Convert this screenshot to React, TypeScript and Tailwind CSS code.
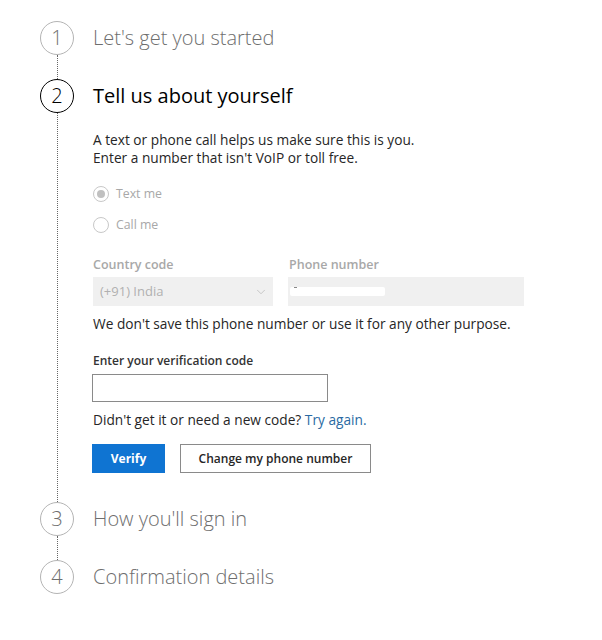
import { ChevronDown } from 'lucide-react';

const font = { fontFamily: '"Open Sans", "Noto Sans", "Liberation Sans", sans-serif' };

function StepCircle({ n, active }: { n: number; active?: boolean }) {
    return (
        <div
            className={`w-[34px] h-[34px] shrink-0 rounded-full flex items-center justify-center text-[20px] font-light ${
                active ? 'border-[1.5px] border-black text-black' : 'border-[1.5px] border-[#b4b4b4] text-[#6e6e6e]'
            }`}
        >
            {n}
        </div>
    );
}

function Step({ n, title, active, line, children }: { n: number; title: string; active?: boolean; line?: boolean; children?: React.ReactNode }) {
    return (
        <div className="flex gap-[19px]">
            <div className="w-[34px] flex flex-col items-center">
                <StepCircle n={n} active={active} />
                {line && <div className="flex-1 w-0 border-l border-dotted border-[#666]"></div>}
            </div>
            <div className={`flex-1 ${line && !children ? 'pb-[24px]' : ''}`}>
                <div className={`h-[34px] flex items-center text-[20px] ${active ? 'text-black font-normal' : 'text-[#6e6e6e] font-light'}`}>
                    {title}
                </div>
                {children}
            </div>
        </div>
    );
}

export default function App() {
    return (
        <div className="w-[602px] h-[640px] bg-white pt-[21px] pl-[40px]" style={font}>
            <Step n={1} title="Let's get you started" line />
            <Step n={2} title="Tell us about yourself" active line>
                <div className="pb-[29px]">
                    <p className="mt-[18px] text-[13.7px] leading-[18px] text-[#262626]">
                        A text or phone call helps us make sure this is you.
                        <br />
                        Enter a number that isn't VoIP or toll free.
                    </p>

                    {/* Radios (disabled) */}
                    <div className="mt-[19px] flex items-center gap-[7px] h-[16px]">
                        <span className="w-[16px] h-[16px] rounded-full border border-[#c8c8c8] flex items-center justify-center">
                            <span className="w-[8px] h-[8px] rounded-full bg-[#c0c0c0]"></span>
                        </span>
                        <span className="text-[12.3px] text-[#a8a8a8]">Text me</span>
                    </div>
                    <div className="mt-[15px] flex items-center gap-[7px] h-[16px]">
                        <span className="w-[16px] h-[16px] rounded-full border border-[#c8c8c8]"></span>
                        <span className="text-[12.3px] text-[#a8a8a8]">Call me</span>
                    </div>

                    {/* Country + phone */}
                    <div className="mt-[23px] flex gap-[15px]">
                        <div className="w-[180px]">
                            <div className="text-[12.5px] leading-[18px] font-semibold text-[#a8a8a8]">Country code</div>
                            <div className="mt-[3px] h-[29px] bg-[#f0f0f0] flex items-center justify-between pl-[7px] pr-[5px] text-[13px] text-[#b0b0b0]">
                                <span>(+91) India</span>
                                <ChevronDown className="w-[14px] h-[14px] text-[#b8b8b8]" strokeWidth={1.25} />
                            </div>
                        </div>
                        <div className="w-[236px]">
                            <div className="text-[12.5px] leading-[18px] font-semibold text-[#a8a8a8] pl-[1px]">Phone number</div>
                            <div className="mt-[3px] h-[29px] bg-[#f0f0f0] flex items-center pl-[2px]">
                                <div className="relative w-[95px] h-[9px] bg-white rounded-[2px]">
                                    <span className="absolute left-[4px] top-[0px] w-[3px] h-[1px] bg-[#888]"></span>
                                </div>
                            </div>
                        </div>
                    </div>

                    <p className="mt-[9px] text-[13.7px] leading-[18px] text-[#262626]">
                        We don't save this phone number or use it for any other purpose.
                    </p>

                    <div className="mt-[20px] text-[12px] leading-[16px] font-semibold text-[#333]">Enter your verification code</div>
                    <input className="mt-[5px] -ml-[1px] block w-[236px] h-[28px] border border-[#8a8a8a] outline-none px-2 text-[14px]" />

                    <p className="mt-[9px] text-[13.7px] leading-[18px] text-[#262626]">
                        Didn't get it or need a new code? <span className="text-[#2a6aa3]">Try again.</span>
                    </p>

                    <div className="mt-[15px] -ml-[1px] flex gap-[15px]">
                        <button className="w-[73px] h-[29px] bg-[#0f74d2] text-white text-[12px] font-bold">Verify</button>
                        <button className="w-[191px] h-[29px] border border-[#8a8a8a] bg-white text-[#262626] text-[12px] font-semibold">
                            Change my phone number
                        </button>
                    </div>
                </div>
            </Step>
            <Step n={3} title="How you'll sign in" line />
            <Step n={4} title="Confirmation details" />
        </div>
    );
}
